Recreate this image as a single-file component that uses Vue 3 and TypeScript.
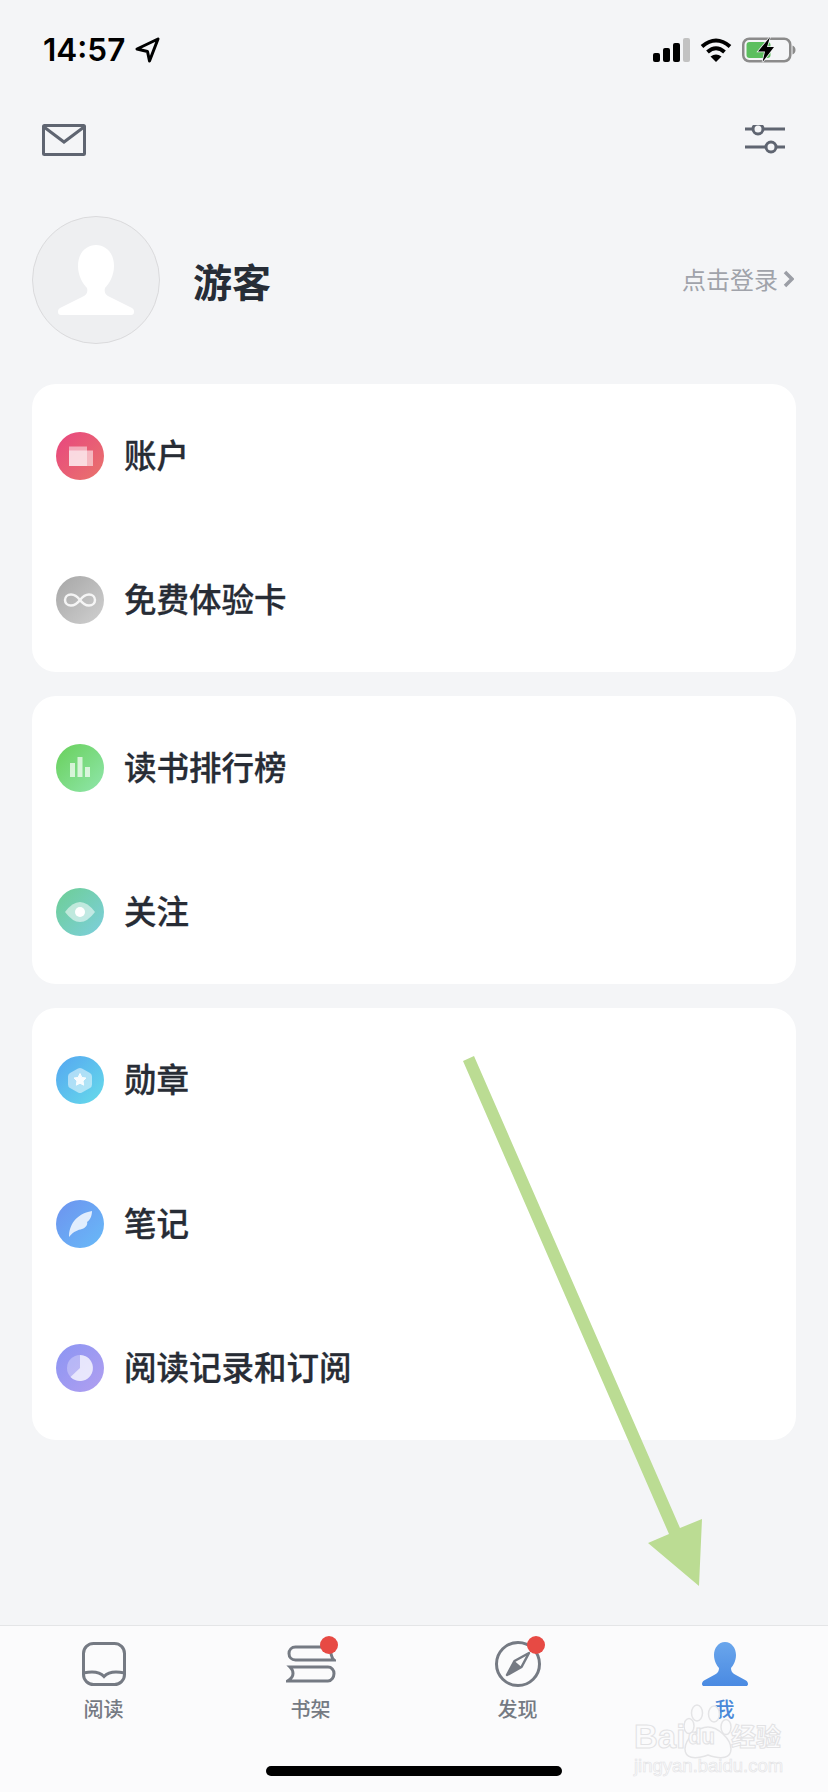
<template>
  <div class="page">
    <!-- status bar -->
    <div class="status">
      <div class="status-left">
        <span class="time">14:57</span>
        <svg class="loc" width="26" height="26" viewBox="0 0 26 26">
          <path d="M24 2 3 12l10.500 2.500L15.500 24z" fill="none" stroke="#000" stroke-width="3" stroke-linejoin="round" />
        </svg>
      </div>
      <div class="status-right">
        <svg width="37" height="24" viewBox="0 0 37 24">
          <rect x="0" y="15" width="7" height="9" rx="2" fill="#000" />
          <rect x="10" y="10" width="7" height="14" rx="2" fill="#000" />
          <rect x="20" y="5" width="7" height="19" rx="2" fill="#000" />
          <rect x="30" y="0" width="7" height="24" rx="2" fill="#c2c2c2" />
        </svg>
        <svg width="32" height="24" viewBox="0 0 32 24">
          <path d="M2 8.500Q16-3.500 30 8.500" fill="none" stroke="#000" stroke-width="4" />
          <path d="M7.500 14Q16 6.500 24.500 14" fill="none" stroke="#000" stroke-width="4" />
          <path d="M16 24 10.500 18.500Q16 14.500 21.500 18.500z" fill="#000" />
        </svg>
        <svg width="54" height="26" viewBox="0 0 54 26">
          <rect x="1.250" y="1.750" width="47" height="22.500" rx="6" fill="none" stroke="#8b8b8b" stroke-width="2.500" />
          <rect x="4.500" y="5" width="24" height="16" rx="3" fill="#5cbf5f" />
          <path d="M50.500 8.500c2 .5 3 2.500 3 4.500s-1 4-3 4.500z" fill="#8b8b8b" />
          <path d="M28 0 16 14.500h7L20.500 25 32 10h-7z" fill="#000" stroke="#f4f5f7" stroke-width="1.500" paint-order="stroke" />
        </svg>
      </div>
    </div>

    <!-- top nav -->
    <div class="nav">
      <svg width="44" height="32" viewBox="0 0 44 32">
        <rect x="1.500" y="1.500" width="41" height="29" rx="1" fill="none" stroke="#5f6571" stroke-width="3" />
        <path d="M2 3 22 18 42 3" fill="none" stroke="#5f6571" stroke-width="3" />
      </svg>
      <svg width="40" height="30" viewBox="0 2 40 30">
        <g fill="none" stroke="#5f6571" stroke-width="3">
          <path d="M0 6h8M18 6h22M0 24h21M31 24h9" />
          <circle cx="13" cy="6" r="5" />
          <circle cx="26" cy="24" r="5" />
        </g>
      </svg>
    </div>

    <!-- profile -->
    <div class="profile">
      <svg class="avatar" width="128" height="128" viewBox="0 0 128 128">
        <circle cx="64" cy="64" r="63.500" fill="#eeeff1" stroke="#dadadc" />
        <path
          d="M64 29C54 29 46 37 46 50 46 60 51 68 55 72 56 76 55 79 50 81L28 92C26 93 26 95 26 96 26 98 27 99 29 99H99C101 99 102 98 102 96 102 95 102 93 100 92L78 81C73 79 72 76 73 72 77 68 82 60 82 50 82 37 74 29 64 29Z"
          fill="#fff"
        />
      </svg>
      <div class="name">游客</div>
      <div class="login">
        <span>点击登录</span>
        <svg width="11" height="18" viewBox="0 0 11 18">
          <path d="M2 2l7 7-7 7" fill="none" stroke="#9b9ea6" stroke-width="3.500" />
        </svg>
      </div>
    </div>

    <!-- menu cards -->
    <div v-for="(group, i) in groups" :key="i" class="card">
      <div v-for="row in group" :key="row.key" class="row">
        <div class="row-icon" :class="row.key">
          <svg width="48" height="48" viewBox="0 0 48 48">
            <template v-if="row.key === 'account'">
              <rect x="13" y="14.500" width="18" height="19.500" fill="#fff" opacity=".5" />
              <rect x="13" y="18.500" width="24" height="15.500" fill="#fff" opacity=".55" />
            </template>
            <path
              v-else-if="row.key === 'free'"
              d="M24 24C21 20 18 18.500 15 18.500 11.500 18.500 9 21 9 24S11.500 29.500 15 29.500C18 29.500 21 28 24 24 27 20 30 18.500 33 18.500 36.500 18.500 39 21 39 24S36.500 29.500 33 29.500C30 29.500 27 28 24 24Z"
              fill="none"
              stroke="#fff"
              stroke-opacity=".85"
              stroke-width="2.500"
            />
            <g v-else-if="row.key === 'rank'" fill="#fff" opacity=".7">
              <rect x="14" y="19" width="5" height="14" />
              <rect x="21.500" y="13" width="5" height="20" />
              <rect x="29" y="23" width="5" height="10" />
            </g>
            <template v-else-if="row.key === 'follow'">
              <path d="M9 24Q24 4 39 24 24 44 9 24Z" fill="#fff" opacity=".55" />
              <circle cx="24" cy="24" r="5" fill="#fff" />
            </template>
            <template v-else-if="row.key === 'medal'">
              <path d="M22 12.500a4 4 0 0 1 4 0l8 4.500a4 4 0 0 1 2 3.500v8a4 4 0 0 1-2 3.500l-8 4.500a4 4 0 0 1-4 0l-8-4.500a4 4 0 0 1-2-3.500v-8a4 4 0 0 1 2-3.500z" fill="#fff" opacity=".5" />
              <path d="M24 17.500l1.900 3.900 4.100.6-3 3 .7 4.200-3.700-2-3.700 2 .7-4.200-3-3 4.100-.6z" fill="#fff" stroke="#fff" stroke-linejoin="round" opacity=".9" />
            </template>
            <path
              v-else-if="row.key === 'note'"
              d="M13 37C13 26 19 14 36 11 36 16 34 20 31 22 32 24 30 28 26 29 22 30 18 31 13 37Z"
              fill="#fff"
              opacity=".8"
            />
            <template v-else>
              <circle cx="24" cy="24" r="13" fill="#fff" opacity=".3" />
              <path d="M24 24V11A13 13 0 1 1 14.500 33Z" fill="#fff" opacity=".65" />
            </template>
          </svg>
        </div>
        <span class="row-label">{{ row.label }}</span>
      </div>
    </div>

    <!-- tab bar -->
    <div class="tabbar">
      <div class="tab">
        <svg width="48" height="48" viewBox="0 0 48 48">
          <g fill="none" stroke="#757a83" stroke-width="3">
            <rect x="3.500" y="3.500" width="41" height="41" rx="10" />
            <path d="M3.500 33C12 31 19 31 24 36.500 29 31 36 31 44.500 33" />
          </g>
        </svg>
        <span>阅读</span>
      </div>
      <div class="tab">
        <svg class="book" width="50" height="48" viewBox="0 0 50 48">
          <g fill="none" stroke="#757a83" stroke-width="3">
            <path d="M41 7H9.500C5.500 7 3 10 3 13.500S5.500 20 9.500 20H48C45.500 18 45 14 44 9" />
            <path d="M4 27H42C45.500 27 48 30 48 33.500S45.500 41 42 41H1.500C5 39 7 36.500 7 33.500S6 29 4 27Z" />
          </g>
        </svg>
        <i class="dot"></i>
        <span>书架</span>
      </div>
      <div class="tab">
        <svg width="48" height="48" viewBox="0 0 48 48">
          <circle cx="24" cy="24" r="21.500" fill="none" stroke="#757a83" stroke-width="3" />
          <path d="M35 13 27.500 27 13 35 20.500 21Z" fill="none" stroke="#757a83" stroke-width="2.500" stroke-linejoin="round" />
          <path d="M27.500 27 13 35 20.500 21Z" fill="#757a83" />
        </svg>
        <i class="dot"></i>
        <span>发现</span>
      </div>
      <div class="tab active">
        <svg width="48" height="48" viewBox="0 0 48 48">
          <defs>
            <linearGradient id="me" x1="0" y1="0" x2="0" y2="1">
              <stop offset="0" stop-color="#6aa6ec" />
              <stop offset="1" stop-color="#4a8ae2" />
            </linearGradient>
          </defs>
          <path
            d="M24 2C17.500 2 13 8 13 15 13 21 16 26 18 28 18 31 17 33 14 34.500L3 40.500C1.500 41.500 1 43 1 44 1 45.500 2 46 3 46H45C46 46 47 45.500 47 44 47 43 46.500 41.500 45 40.500L34 34.500C31 33 30 31 30 28 32 26 35 21 35 15 35 8 30.500 2 24 2Z"
            fill="url(#me)"
          />
        </svg>
        <span>我</span>
      </div>
      <div class="home-bar"></div>
    </div>

    <!-- green annotation arrow -->
    <svg class="arrow" width="828" height="1792" viewBox="0 0 828 1792">
      <polygon points="463,1061 474,1056 680,1528 702,1519 699,1586 648,1543 669,1534" fill="#bbdc93" />
    </svg>

    <!-- watermark -->
    <div class="mark">
      <svg class="paw" width="50" height="58" viewBox="0 0 50 58">
        <g fill="#fbfbfc" stroke="#e4e4e6" stroke-width="1.500">
          <ellipse cx="13" cy="10" rx="5.500" ry="8" />
          <ellipse cx="30" cy="11" rx="5.500" ry="8" />
          <ellipse cx="5" cy="23" rx="5" ry="7.500" />
          <ellipse cx="42" cy="24" rx="5" ry="7.500" />
          <path d="M24 24C34 24 47 36 47 46 47 55 38 57 24 52 10 57 1 55 1 46 1 36 14 24 24 24Z" />
        </g>
      </svg>
      <div class="mark-top">
        <span class="mark-bai">Bai</span>
        <span class="mark-du">du</span>
        <span class="mark-cn">经验</span>
      </div>
      <div class="mark-url">jingyan.baidu.com</div>
    </div>
  </div>
</template>

<script setup lang="ts">
interface MenuRow {
  key: string
  label: string
}

const groups: MenuRow[][] = [
  [
    { key: 'account', label: '账户' },
    { key: 'free', label: '免费体验卡' },
  ],
  [
    { key: 'rank', label: '读书排行榜' },
    { key: 'follow', label: '关注' },
  ],
  [
    { key: 'medal', label: '勋章' },
    { key: 'note', label: '笔记' },
    { key: 'history', label: '阅读记录和订阅' },
  ],
]
</script>

<style>
html,
body {
  margin: 0;
  background: #f4f5f7;
}
</style>

<style scoped>
.page {
  position: relative;
  display: flex;
  flex-direction: column;
  width: 828px;
  height: 1792px;
  overflow: hidden;
  background: #f4f5f7;
  font-family: "Noto Sans CJK SC", "Liberation Sans", sans-serif;
  color: #272c35;
}

/* status bar */
.status {
  display: flex;
  align-items: center;
  justify-content: space-between;
  height: 60px;
  padding: 20px 32px 0 43px;
}

.status-left {
  display: flex;
  align-items: center;
  gap: 9px;
}

.time {
  font-family: Inter, "Liberation Sans", sans-serif;
  font-size: 31.500px;
  font-weight: 600;
  line-height: 40px;
  color: #000;
}

.status-right {
  display: flex;
  align-items: center;
  gap: 10px;
}

/* top nav */
.nav {
  display: flex;
  align-items: center;
  justify-content: space-between;
  height: 120px;
  padding: 0 43px 0 42px;
}

/* profile */
.profile {
  display: flex;
  align-items: center;
  height: 128px;
  margin: 16px 34px 40px 32px;
}

.name {
  margin-left: 33px;
  font-size: 39px;
  font-weight: 700;
  line-height: 56px;
  color: #272d36;
}

.login {
  display: flex;
  align-items: center;
  gap: 5px;
  margin-top: -2px;
  margin-left: auto;
  font-size: 24px;
  line-height: 34px;
  color: #a0a3aa;
}

/* cards */
.card {
  margin: 0 32px 24px;
  background: #fff;
  border-radius: 24px;
}

.row {
  display: flex;
  align-items: center;
  height: 144px;
  padding-left: 24px;
}

.row-icon {
  width: 48px;
  height: 48px;
  border-radius: 50%;
}

.row-icon svg {
  display: block;
}

.row-label {
  margin-top: -4px;
  margin-left: 20px;
  font-size: 32.500px;
  font-weight: 500;
  line-height: 46px;
  -webkit-text-stroke: .3px #272c35;
}

.account { background: linear-gradient(135deg, #e8457f, #e9756c); }
.free { background: linear-gradient(135deg, #a6a6a6, #d0d0d0); }
.rank { background: linear-gradient(135deg, #68d05a, #90e6ac); }
.follow { background: linear-gradient(135deg, #6dce94, #7dcfde); }
.medal { background: linear-gradient(135deg, #55a6f1, #66dcea); }
.note { background: linear-gradient(135deg, #6d93ef, #68baf8); }
.history { background: linear-gradient(135deg, #8b95f3, #b19ff0); }

/* tab bar */
.tabbar {
  position: relative;
  display: grid;
  grid-template-columns: repeat(4, 207px);
  box-sizing: border-box;
  height: 167px;
  margin-top: auto;
  padding-top: 14px;
  background: #fbfbfc;
  border-top: 1px solid #e4e5e7;
}

.tab {
  position: relative;
  display: flex;
  flex-direction: column;
  align-items: center;
  align-self: start;
  font-size: 20px;
  font-weight: 500;
  line-height: 28px;
  color: #757a83;
}

.tab svg {
  display: block;
  margin-bottom: 7px;
}

.tab.active {
  color: #4a88d8;
}

.dot {
  position: absolute;
  top: -4px;
  left: 113px;
  width: 18px;
  height: 18px;
  background: #e74a44;
  border-radius: 50%;
}

.home-bar {
  position: absolute;
  top: 140px;
  left: 266px;
  width: 296px;
  height: 10px;
  background: #000;
  border-radius: 5px;
}

/* overlays */
.arrow {
  position: absolute;
  top: 0;
  left: 0;
  pointer-events: none;
}

.mark {
  position: absolute;
  top: 1703px;
  left: 634px;
  width: 150px;
  height: 72px;
  font-family: "Liberation Sans", "Noto Sans CJK SC", sans-serif;
  color: #fbfbfc;
  -webkit-text-stroke: 1px #e2e2e4;
}

.paw {
  position: absolute;
  top: 0;
  left: 50px;
}

.mark-top {
  position: relative;
  display: flex;
  align-items: center;
  height: 30px;
  padding-top: 19px;
  font-weight: 700;
  line-height: 30px;
}

.mark-bai {
  width: 54px;
  font-size: 33px;
}

.mark-du {
  width: 43px;
  font-size: 22px;
}

.mark-cn {
  font-size: 25px;
  white-space: nowrap;
}

.mark-url {
  position: relative;
  margin-top: 4px;
  font-size: 18.500px;
  line-height: 20px;
  white-space: nowrap;
  -webkit-text-stroke: .6px #e2e2e4;
}
</style>
